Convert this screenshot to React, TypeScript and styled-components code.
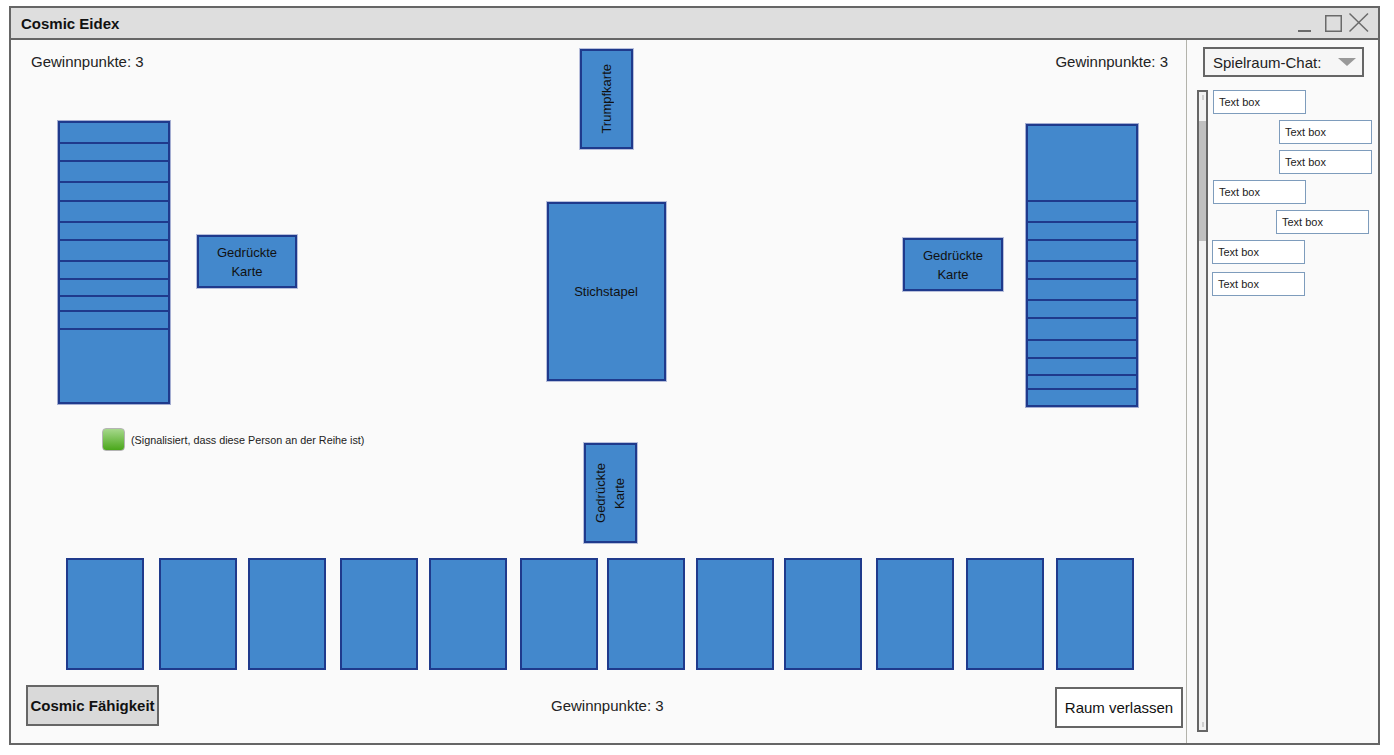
import React from 'react'
import styled, { createGlobalStyle } from 'styled-components'

const GlobalStyle = createGlobalStyle`
  html, body {
    margin: 0;
    padding: 0;
    background: #ffffff;
  }
  body {
    font-family: 'Liberation Sans', Arial, sans-serif;
    color: #222;
  }
  * {
    box-sizing: border-box;
  }
`

const CARD_FILL = '#4388cc'
const CARD_EDGE = '#1f3a8c'

const Window = styled.div`
  margin: 6px 0 0 9px;
  width: 1371px;
  height: 739px;
  border: 2px solid #666;
  display: flex;
  flex-direction: column;
  background: #fafafa;
`

const TitleBar = styled.div`
  flex: none;
  height: 32px;
  background: #dedede;
  border-bottom: 2px solid #666;
  display: flex;
  align-items: center;
  justify-content: space-between;
  padding: 0 8px 0 10px;
  font-size: 15px;
  font-weight: bold;
  color: #111;
`

const Body = styled.div`
  flex: 1;
  display: flex;
  min-height: 0;
`

const Board = styled.div`
  flex: none;
  width: 1176px;
  border-right: 1px solid #b3b3ab;
  display: flex;
  flex-direction: column;
`

const TopArea = styled.div`
  flex: none;
  height: 518px;
  display: grid;
  grid-template-columns: 525px 140px 1fr;
`

const SideColumn = styled.div<{ $right?: boolean }>`
  display: flex;
  flex-direction: column;
  align-items: ${({ $right }) => ($right ? 'flex-end' : 'flex-start')};
`

const CenterColumn = styled.div`
  display: flex;
  flex-direction: column;
  align-items: center;
`

const Score = styled.div<{ $inset?: string }>`
  font-size: 15px;
  line-height: 18px;
  margin: ${({ $inset }) => $inset || '0'};
`

const PlayerRow = styled.div<{ $top: number; $inset: string }>`
  display: flex;
  align-items: flex-start;
  gap: ${({ $inset }) => $inset};
  margin-top: ${({ $top }) => $top}px;
`

const Stack = styled.div<{ $left: number; $right: number }>`
  width: 112px;
  border: 2px solid ${CARD_EDGE};
  box-shadow: 0 0 0 1px rgba(60, 80, 160, 0.45);
  background: ${CARD_FILL};
  display: flex;
  flex-direction: column;
  margin-left: ${({ $left }) => $left}px;
  margin-right: ${({ $right }) => $right}px;
`

const Strip = styled.div<{ $h: number }>`
  height: ${({ $h }) => $h}px;
  border-bottom: 2px solid ${CARD_EDGE};
  &:last-child {
    border-bottom: none;
  }
`

const Card = styled.div<{ $w: number; $h: number; $top?: number; $left?: number }>`
  flex: none;
  width: ${({ $w }) => $w}px;
  height: ${({ $h }) => $h}px;
  margin-top: ${({ $top }) => $top || 0}px;
  margin-left: ${({ $left }) => $left || 0}px;
  background: ${CARD_FILL};
  border: 2px solid ${CARD_EDGE};
  box-shadow: 0 0 0 1px rgba(60, 80, 160, 0.35);
  display: flex;
  align-items: center;
  justify-content: center;
  text-align: center;
  font-size: 13px;
  line-height: 19px;
  color: #111;
`

const SideText = styled.span`
  writing-mode: vertical-rl;
  transform: rotate(180deg);
`

const Signal = styled.div`
  display: flex;
  align-items: center;
  gap: 6px;
  margin: 24px 0 0 91px;
  font-size: 10.8px;
  color: #222;
`

const Lamp = styled.div`
  width: 23px;
  height: 23px;
  border-radius: 4px;
  border: 1px solid #b4b4b4;
  background: linear-gradient(#a6d88c, #4aa71a);
`

const Hand = styled.div`
  flex: none;
  display: flex;
  height: 112px;
  margin-left: 55px;
`

const HandCard = styled.div<{ $gap: number }>`
  width: 78px;
  height: 112px;
  margin-left: ${({ $gap }) => $gap}px;
  background: ${CARD_FILL};
  border: 2px solid ${CARD_EDGE};
`

const Footer = styled.div`
  flex: none;
  display: flex;
  align-items: flex-start;
  margin-top: 15px;
`

const Button = styled.div<{ $grey?: boolean }>`
  height: 41px;
  display: flex;
  align-items: center;
  justify-content: center;
  border: 2px solid #666;
  font-size: 15px;
  color: #111;
  background: ${({ $grey }) => ($grey ? '#d9d9d9' : '#ffffff')};
  font-weight: ${({ $grey }) => ($grey ? 'bold' : 'normal')};
`

const AbilityButton = styled(Button)`
  width: 133px;
  margin-left: 15px;
`

const LeaveButton = styled(Button)`
  width: 128px;
  margin: 2px 3px 0 auto;
`

const Chat = styled.div`
  flex: 1;
  display: flex;
  flex-direction: column;
  padding: 7px 0 0 10px;
`

const ChatSelect = styled.div`
  width: 161px;
  height: 30px;
  margin-left: 6px;
  border: 2px solid #666;
  background: #f6f6f6;
  display: flex;
  align-items: center;
  justify-content: space-between;
  padding: 0 6px 0 8px;
  font-size: 15px;
  color: #222;
`

const Caret = styled.span`
  width: 0;
  height: 0;
  border-left: 9.5px solid transparent;
  border-right: 9.5px solid transparent;
  border-top: 8px solid #999;
`

const ChatBody = styled.div`
  display: flex;
  align-items: flex-start;
  margin-top: 13px;
`

const ScrollTrack = styled.div`
  position: relative;
  width: 11px;
  height: 642px;
  border: 2px solid #666;
  background: #f2f2f2;
`

const ScrollThumb = styled.div`
  margin-top: 29px;
  height: 120px;
  background: #c0c0c0;
`

const ScrollMark = styled.div<{ $bottom?: boolean }>`
  position: absolute;
  left: 3px;
  width: 2px;
  height: 5px;
  background: #cfcfcf;
  ${({ $bottom }) => ($bottom ? 'bottom: 3px;' : 'top: 3px;')}
`

const Messages = styled.div`
  display: flex;
  flex-direction: column;
  margin-left: 4px;
`

const TextBox = styled.div<{ $indent: number; $gap: number }>`
  width: 93px;
  height: 24px;
  margin: ${({ $gap }) => $gap}px 0 0 ${({ $indent }) => $indent}px;
  border: 1px solid #7e9cbc;
  background: #ffffff;
  display: flex;
  align-items: center;
  padding-left: 5px;
  font-size: 11px;
  color: #222;
`

const leftStrips = [21, 18, 21, 19, 21, 18, 21, 18, 17, 15, 18, 72]
const rightStrips = [76, 21, 18, 21, 18, 21, 18, 22, 18, 17, 14, 15]
const handX = [66, 159, 248, 340, 429, 520, 607, 696, 784, 876, 966, 1056]
const messages = [
  { indent: 1, gap: 0 },
  { indent: 67, gap: 6 },
  { indent: 67, gap: 6 },
  { indent: 1, gap: 6 },
  { indent: 64, gap: 6 },
  { indent: 0, gap: 6 },
  { indent: 0, gap: 8 },
]

const WindowControls = () => (
  <svg width="75" height="30" viewBox="0 0 75 30" fill="none" stroke="#6a6a6a">
    <line x1="3" y1="23" x2="16" y2="23" strokeWidth="2" />
    <rect x="30.75" y="7.75" width="15.5" height="15.5" strokeWidth="1.5" />
    <line x1="54.5" y1="5.5" x2="73" y2="23.5" strokeWidth="1.5" />
    <line x1="73" y1="5.5" x2="54.5" y2="23.5" strokeWidth="1.5" />
  </svg>
)

export default function App() {
  return (
    <>
      <GlobalStyle />
      <Window>
        <TitleBar>
          <span>Cosmic Eidex</span>
          <WindowControls />
        </TitleBar>
        <Body>
          <Board>
            <TopArea>
              <SideColumn>
                <Score $inset="13px 0 0 20px">Gewinnpunkte: 3</Score>
                <PlayerRow $top={50} $inset="27px">
                  <Stack $left={47} $right={0}>
                    {leftStrips.map((h, i) => (
                      <Strip key={i} $h={h} />
                    ))}
                  </Stack>
                  <Card $w={100} $h={53} $top={114}>
                    Gedrückte
                    <br />
                    Karte
                  </Card>
                </PlayerRow>
                <Signal>
                  <Lamp />
                  <span>(Signalisiert, dass diese Person an der Reihe ist)</span>
                </Signal>
              </SideColumn>

              <CenterColumn>
                <Card $w={53} $h={100} $top={9}>
                  <SideText>Trumpfkarte</SideText>
                </Card>
                <Card $w={119} $h={179} $top={53}>
                  Stichstapel
                </Card>
                <Card $w={53} $h={100} $top={62} $left={8}>
                  <SideText>
                    Gedrückte
                    <br />
                    Karte
                  </SideText>
                </Card>
              </CenterColumn>

              <SideColumn $right>
                <Score $inset="13px 18px 0 0">Gewinnpunkte: 3</Score>
                <PlayerRow $top={53} $inset="23px">
                  <Card $w={100} $h={53} $top={114}>
                    Gedrückte
                    <br />
                    Karte
                  </Card>
                  <Stack $left={0} $right={48}>
                    {rightStrips.map((h, i) => (
                      <Strip key={i} $h={h} />
                    ))}
                  </Stack>
                </PlayerRow>
              </SideColumn>
            </TopArea>

            <Hand>
              {handX.map((x, i) => (
                <HandCard key={i} $gap={i === 0 ? 0 : x - handX[i - 1] - 78} />
              ))}
            </Hand>

            <Footer>
              <AbilityButton $grey>Cosmic Fähigkeit</AbilityButton>
              <Score $inset="12px 0 0 392px">Gewinnpunkte: 3</Score>
              <LeaveButton>Raum verlassen</LeaveButton>
            </Footer>
          </Board>

          <Chat>
            <ChatSelect>
              <span>Spielraum-Chat:</span>
              <Caret />
            </ChatSelect>
            <ChatBody>
              <ScrollTrack>
                <ScrollMark />
                <ScrollThumb />
                <ScrollMark $bottom />
              </ScrollTrack>
              <Messages>
                {messages.map((m, i) => (
                  <TextBox key={i} $indent={m.indent} $gap={m.gap}>
                    Text box
                  </TextBox>
                ))}
              </Messages>
            </ChatBody>
          </Chat>
        </Body>
      </Window>
    </>
  )
}
